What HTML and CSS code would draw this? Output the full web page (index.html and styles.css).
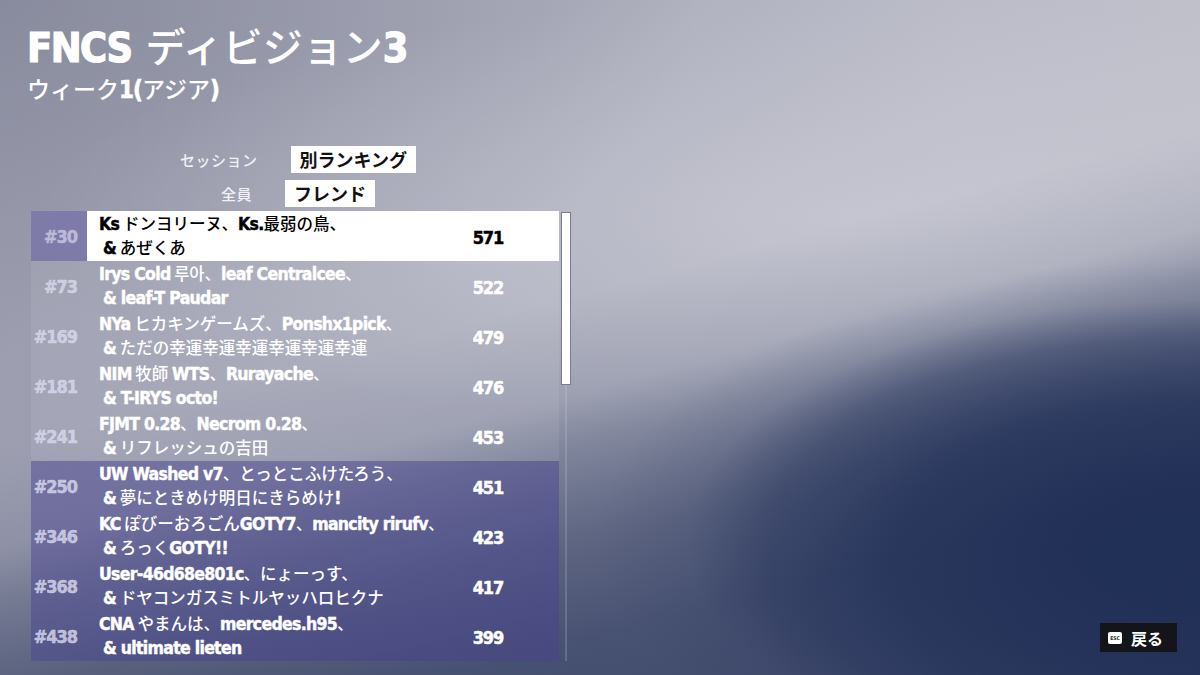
FILE: index.html
```html
<!DOCTYPE html>
<html lang="ja">
<head>
<meta charset="utf-8">
<title>FNCS ディビジョン3</title>
<link rel="stylesheet" href="styles.css">
</head>
<body>
<div class="screen">
  <header class="heading">
    <h1 class="title"><b>FNCS</b> <span class="title-jp">ディビジョン</span><b>3</b></h1>
    <h2 class="subtitle">ウィーク<b>1(</b>アジア<b>)</b></h2>
  </header>

  <section class="board">
    <div class="filters">
      <div class="filter">
        <span class="filter-label">セッション</span>
        <span class="filter-value">別ランキング</span>
      </div>
      <div class="filter">
        <span class="filter-label">全員</span>
        <span class="filter-value">フレンド</span>
      </div>
    </div>

    <div class="list-wrap">
      <ul class="list">
        <li class="row row-me">
          <span class="rank"><b>#30</b></span>
          <span class="names"><span class="line"><b>Ks</b> ドンヨリーヌ、<b>Ks.</b>最弱の鳥、</span><span class="line line2"><b>&amp;</b> あぜくあ</span></span>
          <span class="score"><b>571</b></span>
        </li>
        <li class="row row-light">
          <span class="rank"><b>#73</b></span>
          <span class="names"><span class="line"><b>Irys Cold</b> 루아、<b>leaf Centralcee</b>、</span><span class="line line2"><b>&amp; leaf-T Paudar</b></span></span>
          <span class="score"><b>522</b></span>
        </li>
        <li class="row row-light">
          <span class="rank"><b>#169</b></span>
          <span class="names"><span class="line"><b>NYa</b> ヒカキンゲームズ、<b>Ponshx1pick</b>、</span><span class="line line2"><b>&amp;</b> ただの幸運幸運幸運幸運幸運幸運</span></span>
          <span class="score"><b>479</b></span>
        </li>
        <li class="row row-light">
          <span class="rank"><b>#181</b></span>
          <span class="names"><span class="line"><b>NIM</b> 牧師 <b>WTS</b>、<b>Rurayache</b>、</span><span class="line line2"><b>&amp; T-IRYS octo!</b></span></span>
          <span class="score"><b>476</b></span>
        </li>
        <li class="row row-light">
          <span class="rank"><b>#241</b></span>
          <span class="names"><span class="line"><b>FJMT 0.28</b>、<b>Necrom 0.28</b>、</span><span class="line line2"><b>&amp;</b> リフレッシュの吉田</span></span>
          <span class="score"><b>453</b></span>
        </li>
        <li class="row row-purple">
          <span class="rank"><b>#250</b></span>
          <span class="names"><span class="line"><b>UW Washed v7</b>、とっとこふけたろう、</span><span class="line line2"><b>&amp;</b> 夢にときめけ明日にきらめけ<b>!</b></span></span>
          <span class="score"><b>451</b></span>
        </li>
        <li class="row row-purple">
          <span class="rank"><b>#346</b></span>
          <span class="names"><span class="line"><b>KC</b> ぽびーおろごん<b>GOTY7</b>、<b>mancity rirufv</b>、</span><span class="line line2"><b>&amp;</b> ろっく<b>GOTY!!</b></span></span>
          <span class="score"><b>423</b></span>
        </li>
        <li class="row row-purple">
          <span class="rank"><b>#368</b></span>
          <span class="names"><span class="line"><b>User-46d68e801c</b>、にょーっす、</span><span class="line line2"><b>&amp;</b> ドヤコンガスミトルヤッハロヒクナ</span></span>
          <span class="score"><b>417</b></span>
        </li>
        <li class="row row-purple">
          <span class="rank"><b>#438</b></span>
          <span class="names"><span class="line"><b>CNA</b> やまんは、<b>mercedes.h95</b>、</span><span class="line line2"><b>&amp; ultimate lieten</b></span></span>
          <span class="score"><b>399</b></span>
        </li>
      </ul>
      <div class="scrollbar"><div class="thumb"></div></div>
    </div>
  </section>

  <div class="back">
    <span class="key">ESC</span>
    <span class="back-label">戻る</span>
  </div>
</div>
</body>
</html>
```
FILE: styles.css
```css
* { box-sizing: border-box; }
html, body { margin: 0; padding: 0; }
body {
  width: 1200px;
  height: 675px;
  overflow: hidden;
  font-family: "Noto Sans CJK JP", "Noto Sans", sans-serif;
}
b {
  font-weight: 700;
  font-family: "DejaVu Sans Condensed", "Noto Sans CJK JP", sans-serif;
}

.screen {
  position: relative;
  width: 1200px;
  height: 675px;
  padding: 21px 0 0 27px;
  color: #fff;
  background:
    radial-gradient(ellipse 900px 420px at 100% 80%, rgba(30, 45, 85, 0.92) 0%, rgba(30, 45, 85, 0.9) 14%, rgba(30, 45, 85, 0.76) 33%, rgba(30, 45, 85, 0.46) 48%, rgba(30, 45, 85, 0.1) 57%, rgba(30, 45, 85, 0) 67%),
    linear-gradient(165deg, rgba(40, 52, 90, 0) 45%, rgba(40, 52, 90, 0.12) 55%, rgba(40, 52, 90, 0.32) 60%, rgba(40, 52, 90, 0.47) 65%, rgba(40, 52, 90, 0.6) 70%, rgba(40, 52, 90, 0.68) 75%, rgba(40, 52, 90, 0.76) 80%, rgba(40, 52, 90, 0.88) 100%),
    radial-gradient(ellipse 800px 220px at 70% 32%, rgba(208, 208, 218, 0.55), rgba(208, 208, 218, 0) 100%),
    radial-gradient(ellipse 700px 350px at 0% 0%, rgba(100, 104, 122, 0.35), rgba(100, 104, 122, 0) 100%),
    linear-gradient(to right, #9c9eb0 0%, #aaacbb 45%, #bbbcc8 80%, #c0c0cb 100%);
}

.heading { margin: 0; }
.title {
  margin: 0;
  font-size: 40px;
  line-height: 48px;
  font-weight: 500;
}
.title b {
  font-size: 41px;
  letter-spacing: -1.5px;
  -webkit-text-stroke: 1.2px #fff;
}
.title-jp { margin-left: 5px; }
.subtitle {
  margin: 1px 0 0 0;
  font-size: 23px;
  line-height: 30px;
  font-weight: 500;
}
.subtitle b {
  font-size: 24px;
  letter-spacing: -1px;
  -webkit-text-stroke: 0.6px #fff;
}

.board {
  margin-top: 41px;
  margin-left: 4px;
  width: 540px;
}
.filters {
  width: 534px;
  display: flex;
  flex-direction: column;
  align-items: center;
  gap: 7px;
}
.filter {
  display: flex;
  align-items: center;
  gap: 33px;
}
.filter-label {
  font-size: 15px;
  font-weight: 500;
  color: #f0f0f6;
  letter-spacing: 0.5px;
}
.filter-value {
  background: #fff;
  color: #111;
  font-size: 18px;
  font-weight: 700;
  line-height: 27px;
  height: 27px;
  padding: 0 9px;
}

.list-wrap {
  margin-top: 4px;
  display: flex;
  gap: 2px;
}
.list {
  list-style: none;
  margin: 0;
  padding: 0;
  width: 528px;
}
.row {
  height: 50px;
  display: flex;
  align-items: center;
}
.row-light { background: rgba(255, 255, 255, 0.07); }
.row-purple { background: rgba(72, 64, 145, 0.45); }
.row-me { background: #fff; color: #000; }

.rank {
  width: 56px;
  flex-shrink: 0;
  align-self: stretch;
  display: flex;
  align-items: center;
  justify-content: flex-end;
  padding-right: 10px;
  font-size: 18px;
  color: rgba(218, 218, 238, 0.8);
}
.rank b { letter-spacing: -1px; -webkit-text-stroke: 0.5px currentColor; }
.row-me .rank { background: #7e7ba9; color: #bcbad8; }

.names {
  flex: 1;
  min-width: 0;
  display: flex;
  flex-direction: column;
  padding-left: 12px;
  font-size: 16.5px;
  line-height: 23px;
  font-weight: 500;
  white-space: nowrap;
}
.names b { font-size: 17.5px; letter-spacing: -0.7px; -webkit-text-stroke: 0.45px currentColor; }
.line2 { padding-left: 4px; }

.score {
  flex-shrink: 0;
  width: 60px;
  margin-right: 56px;
  text-align: right;
  font-size: 18px;
}
.score b { letter-spacing: -1.2px; -webkit-text-stroke: 0.5px currentColor; }

.scrollbar {
  position: relative;
  width: 10px;
  display: flex;
  justify-content: center;
}
.scrollbar::before {
  content: "";
  width: 2px;
  height: 100%;
  background: rgba(200, 205, 225, 0.22);
}
.thumb {
  position: absolute;
  top: 1px;
  left: 0;
  width: 10px;
  height: 173px;
  background: #fff;
  border: 1px solid #7c7c8c;
}

.back {
  position: absolute;
  right: 23px;
  bottom: 23px;
  width: 77px;
  height: 29px;
  background: rgba(18, 18, 22, 0.92);
  display: flex;
  align-items: center;
  gap: 9px;
  padding-left: 8px;
}
.key {
  width: 14px;
  height: 12px;
  background: #fff;
  border-radius: 2px;
  color: #222;
  font-family: "DejaVu Sans Condensed", sans-serif;
  font-weight: 700;
  font-size: 5px;
  line-height: 12px;
  text-align: center;
}
.back-label {
  font-size: 16px;
  font-weight: 700;
  color: #fff;
}
```
